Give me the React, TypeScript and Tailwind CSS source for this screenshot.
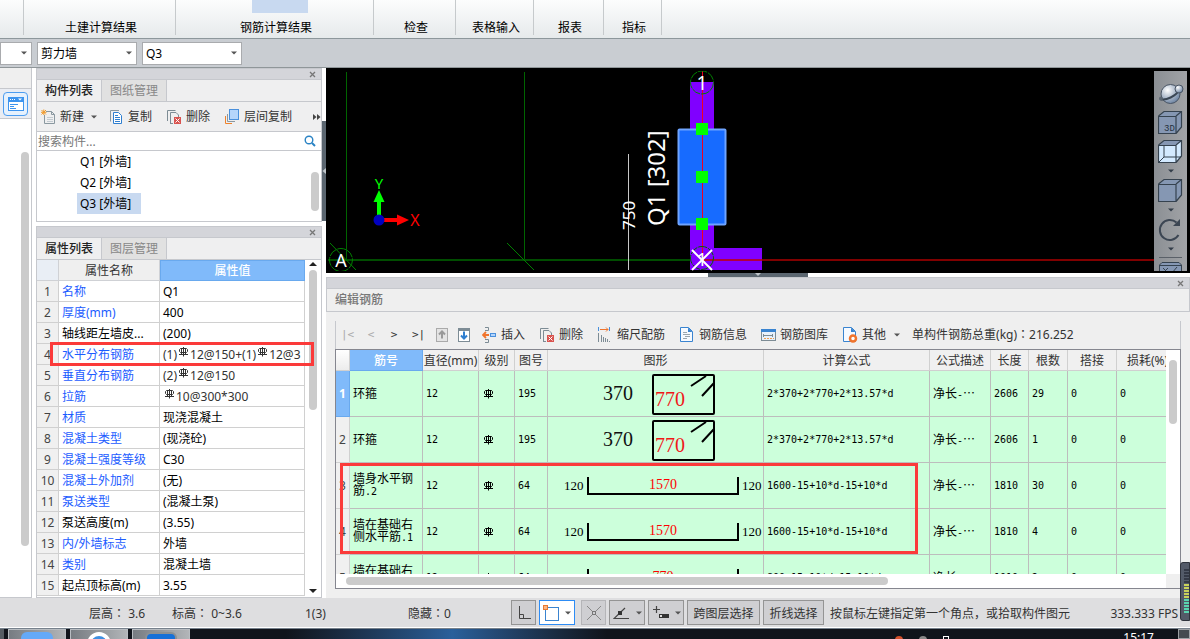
import React from "react";

const ui = "font-['Noto_Sans','Noto_Sans_CJK_SC',sans-serif]";
const grid = "font-['DejaVu_Sans_Mono','Noto_Sans_CJK_SC',monospace]";

type IconProps = { children: React.ReactNode; w?: number; h?: number };
const Icon = ({ children, w = 16, h = 16 }: IconProps) => (
  <svg width={w} height={h} viewBox={`0 0 ${w} ${h}`} fill="none" aria-hidden="true" className="shrink-0">
    {children}
  </svg>
);

// Full-width punctuation set in the centre of its box.
const Mark = ({ children }: { children: string }) => (
  <span lang="zh-TW" className="font-['Noto_Sans_CJK_TC',sans-serif] leading-none">
    {children}
  </span>
);

const Caret = ({ color = "#555" }: { color?: string }) => (
  <Icon w={6} h={4}>
    <path d="M0 0.5H6L3 3.5Z" fill={color} />
  </Icon>
);

const CloseIcon = () => (
  <Icon w={7} h={7}>
    <path d="M1 1L6 6M6 1L1 6" stroke="#777" strokeWidth="1.3" />
  </Icon>
);

const NewIcon = () => (
  <Icon>
    <path d="M5 2.5H10.5L13.5 5.5V14.5H3.5V6" stroke="#8a98a0" />
    <path d="M10.5 2.5V5.5H13.5" stroke="#8a98a0" />
    <path d="M6 8.5H12M6 10.5H12M6 12.5H12" stroke="#c2cad0" />
    <path d="M0.5 1L5 5.5M5 1L0.5 5.5M2.8 0.5V6M0 3.3H5.5" stroke="#f09a2c" />
  </Icon>
);

const CopyIcon = () => (
  <Icon>
    <path d="M1.500 12.500V1.500H10" stroke="#8a98a0" />
    <path d="M4.500 3.500H9.500L12.500 6.500V14.500H4.500Z" fill="#fff" stroke="#2f7fd0" />
    <path d="M6 6.500H9M6 8.500H11M6 10.500H11M6 12.500H11" stroke="#2f7fd0" />
  </Icon>
);

const DeleteIcon = () => (
  <Icon>
    <path d="M1.5 12V1.5H9.5M4.500 14.500V3.500H10L12.500 6V8M4 14.500H7" stroke="#7d8c95" />
    <rect x="8" y="8" width="7" height="7" fill="#d9534f" />
    <path d="M9.5 9.5L13.5 13.5M13.5 9.5L9.5 13.5" stroke="#fff" />
  </Icon>
);

const LayerCopyIcon = () => (
  <Icon>
    <path d="M1.5 7V14.5H8" stroke="#f0822c" />
    <path d="M3.5 5V12.5H11" stroke="#8a98a0" />
    <rect x="5.5" y="0.500" width="9" height="10" fill="#b5d5fb" stroke="#4a90dc" />
  </Icon>
);

const SearchIcon = () => (
  <Icon w={12} h={12}>
    <circle cx="5" cy="5" r="3.8" stroke="#2a83c4" strokeWidth="1.4" />
    <path d="M8 8L11 11" stroke="#2a83c4" strokeWidth="2" />
  </Icon>
);

const Rebar = ({ raised = false }: { raised?: boolean }) => (
  <svg
    width="9"
    height="10"
    viewBox="0 0 9 10"
    fill="none"
    stroke={raised ? "#333" : "#000"}
    className={raised ? "mx-0.5 mb-0.5 inline-block align-baseline" : "inline-block align-middle"}
    role="img"
    aria-label="HRB400"
  >
    <path d="M1.500 1.500H7.500L8.500 2.500V4.500L7.500 5.500H1.500L0.500 4.500V2.500Z M2.500 1.500V7.500 M4.500 0V9.500 M6.500 1.500V7.500 M0 7.500H9" strokeWidth="1" />
  </svg>
);

const ribbon = [
  { label: "", w: "w-[24px]", active: false },
  { label: "土建计算结果", w: "w-[152px]", active: false },
  { label: "钢筋计算结果", w: "w-[198px]", active: true },
  { label: "检查", w: "w-[82px]", active: false },
  { label: "表格输入", w: "w-[78px]", active: false },
  { label: "报表", w: "w-[70px]", active: false },
  { label: "指标", w: "w-[58px]", active: false },
];

function Ribbon() {
  return (
    <nav className="flex h-[39px] shrink-0 border-b border-[#8d979b] bg-linear-to-b from-[#fcfdfd] to-[#e6eaeb]">
      {ribbon.map((g, i) => (
        <div key={i} className={`${g.w} relative flex shrink-0 justify-center pl-0.5`}>
          {g.active && <span className="absolute top-0 h-[13px] w-14 translate-x-1 bg-[#c8d9f0]" />}
          {g.label && <button className="relative mt-[19px] h-[18px] text-black">{g.label}</button>}
          <span className="absolute top-0 right-0 h-[35px] w-px bg-[#c6cacc]" />
        </div>
      ))}
    </nav>
  );
}

function Combo({ label, value, w }: { label: string; value: string; w: string }) {
  return (
    <label className={`relative flex h-[23px] items-center border border-[#a9abae] bg-white ${w}`}>
      <select aria-label={label} className="h-full w-full appearance-none bg-transparent pt-0.5 pl-[3px] text-black">
        <option>{value}</option>
      </select>
      <span className="pointer-events-none absolute right-1">
        <Caret />
      </span>
    </label>
  );
}

function PanelHead() {
  return (
    <div className="flex h-[11px] shrink-0 items-center justify-end border-b border-[#c6c8cd] bg-[#d4d5da] pr-[5px]">
      <button aria-label="关闭">
        <CloseIcon />
      </button>
    </div>
  );
}

function Tabs({ first, second }: { first: string; second: string }) {
  return (
    <div className="flex h-[22px] shrink-0 border-b border-[#c6c8cd] bg-[#efeff0]">
      <button className="w-[65px] border-r border-[#c6c8cd] font-medium text-[#222]">{first}</button>
      <button className="w-[65px] border-r border-[#c6c8cd] bg-[#e1e1e1] text-[#888]">{second}</button>
    </div>
  );
}

function ComponentPanel() {
  return (
    <section className="flex h-[154px] shrink-0 flex-col border border-[#c6c8cd] bg-white">
      <PanelHead />
      <Tabs first="构件列表" second="图纸管理" />
      <div className="flex h-[30px] shrink-0 items-center border-b border-[#c6c8cd] bg-[#efeff0] pl-1 text-[#333]">
        <button className="flex items-center gap-[3px]">
          <NewIcon />
          新建
          <span className="ml-1">
            <Caret />
          </span>
        </button>
        <button className="ml-3 flex items-center gap-[3px]">
          <CopyIcon />
          复制
        </button>
        <button className="ml-3.5 flex items-center gap-1">
          <DeleteIcon />
          删除
        </button>
        <button className="ml-3.5 flex items-center gap-1">
          <LayerCopyIcon />
          层间复制
        </button>
        <button aria-label="更多" className="ml-auto">
          <Icon w={8} h={6}>
            <path d="M0 0L3.500 3L0 6ZM4 0L7.500 3L4 6Z" fill="#444" />
          </Icon>
        </button>
      </div>
      <label className="flex h-[19px] shrink-0 items-center border-b border-[#c6c8cd] pr-[5px] pl-px">
        <input aria-label="搜索构件" placeholder="搜索构件..." className="min-w-0 flex-1 pt-0.5 outline-none placeholder:text-[#777]" />
        <SearchIcon />
      </label>
      <div className="flex min-h-0 flex-1">
        <ul className="flex flex-1 flex-col items-start pl-10 text-black">
          {["Q1 [外墙]", "Q2 [外墙]", "Q3 [外墙]"].map((t, i) => (
            <li key={t} className={`h-[21px] pr-2.5 pl-[3px] leading-[21px] ${i === 2 ? "bg-[#c8d9f0]" : ""}`}>
              {t}
            </li>
          ))}
        </ul>
        <div className="mt-[21px] mr-0.5 h-[39px] w-2 rounded-full bg-[#cbcbcb]" />
      </div>
    </section>
  );
}

const props: [string, React.ReactNode, boolean][] = [
  ["名称", "Q1", true],
  ["厚度(mm)", "400", true],
  ["轴线距左墙皮...", "(200)", false],
  ["水平分布钢筋", <span className="text-[#333]">(1)<Rebar raised />12@150+(1)<Rebar raised />12@3</span>, true],
  ["垂直分布钢筋", <span className="text-[#333]">(2)<Rebar raised />12@150</span>, true],
  ["拉筋", <span className="text-[#333]"><Rebar raised />10@300*300</span>, true],
  ["材质", "现浇混凝土", true],
  ["混凝土类型", "(现浇砼)", true],
  ["混凝土强度等级", "C30", true],
  ["混凝土外加剂", "(无)", true],
  ["泵送类型", "(混凝土泵)", true],
  ["泵送高度(m)", "(3.55)", false],
  ["内/外墙标志", "外墙", true],
  ["类别", "混凝土墙", true],
  ["起点顶标高(m)", "3.55", false],
];

function PropertyPanel() {
  return (
    <section className="flex min-h-0 flex-1 flex-col border border-[#c6c8cd] bg-white">
      <PanelHead />
      <Tabs first="属性列表" second="图层管理" />
      <div className="relative flex min-h-0 flex-1">
        <div className="min-w-0 flex-1 overflow-hidden">
          <table className="w-full table-fixed border-separate border-spacing-0">
            <colgroup>
              <col className="w-[22px]" />
              <col className="w-[101px]" />
              <col />
            </colgroup>
            <thead>
              <tr className="h-[21px] leading-[18px]">
                <th className="border-r border-b border-[#cfd1d5] bg-[#e9eef5]" />
                <th className="border-r border-b border-[#cfd1d5] bg-[#efefef] p-0 pt-0.5 font-normal text-[#333]">属性名称</th>
                <th className="border border-[#69a9ee] bg-[#80bafa] p-0 pt-px font-medium text-white">属性值</th>
              </tr>
            </thead>
            <tbody>
              {props.map(([name, value, blue], i) => (
                <tr key={name} className="h-[21px] leading-[18px]">
                  <td className="border-r border-b border-[#d0d0d0] bg-[#f0f0f0] p-0 pt-0.5 text-center text-[#444]">{i + 1}</td>
                  <td className={`overflow-hidden border-r border-b border-[#d0d0d0] p-0 pt-0.5 pl-[3px] whitespace-nowrap ${blue ? "text-[#1c5cff]" : "text-black"}`}>
                    {name}
                  </td>
                  <td className="overflow-hidden border-r border-b border-[#d0d0d0] p-0 pt-0.5 pl-[3px] whitespace-nowrap text-black">
                    <div className="h-[18px]">{value}</div>
                  </td>
                </tr>
              ))}
            </tbody>
          </table>
        </div>
        <div className="flex w-4 shrink-0 flex-col items-center pt-0.5 pb-1">
          <Icon w={8} h={4}>
            <path d="M0 4H8L4 0Z" fill="#222" />
          </Icon>
          <div className="mt-1 h-[140px] w-2 rounded-full bg-[#cbcbcb]" />
          <div className="flex-1" />
          <Icon w={8} h={4}>
            <path d="M0 0H8L4 4Z" fill="#222" />
          </Icon>
        </div>
        <div className="pointer-events-none absolute top-[82px] right-[7px] left-[13px] h-6 border-3 border-[#fb3a3a]" />
      </div>
    </section>
  );
}

function Canvas() {
  return (
    <div className="flex h-[205px] shrink-0 bg-black pt-[3px] pr-[3px] pb-0.5">
      <svg className={`h-full min-w-0 flex-1 ${ui}`} fill="none">
        <g transform="translate(0 -3)">
          <path d="M20.500 4V192M198.500 4V192" stroke="#006400" />
          <path d="M2 192H376" stroke="#004d00" strokeWidth="2" />
          <path d="M4 175L30 202M181 175L208 202" stroke="#008000" />
          <circle cx="15" cy="192" r="11.5" stroke="#008000" strokeDasharray="9 1" />
          <text x="15" y="199" fill="#fff" fontSize="18" textAnchor="middle">A</text>
          <rect x="364" y="14" width="24" height="188" fill="#8000ff" />
          <rect x="388" y="180" width="48" height="22" fill="#8000ff" />
          <line x1="376" y1="192" x2="100%" y2="192" stroke="#800000" strokeWidth="2" />
          <line x1="376" y1="192" x2="436" y2="192" stroke="#b00040" strokeWidth="2" />
          <rect x="352.500" y="61.500" width="47" height="95" rx="1" fill="#176bff" stroke="#6ea4ff" strokeWidth="2" />
          <path d="M376.500 3V192" stroke="#f00020" />
          <circle cx="376" cy="14.500" r="11.500" stroke="#008000" strokeDasharray="9 1" />
          <circle cx="376" cy="190" r="11.500" stroke="#006400" strokeDasharray="9 1" />
          <text x="376" y="22" fill="#fff" fontSize="19" textAnchor="middle">1</text>
          <text x="376" y="198" fill="#fff" fontSize="18" textAnchor="middle">1</text>
          <path d="M366 182L386 202M386 182L366 202" stroke="#fff" strokeWidth="2" />
          <g fill="#0f0">
            <rect x="370" y="55" width="12" height="12" />
            <rect x="370" y="103" width="12" height="12" />
            <rect x="370" y="150" width="12" height="12" />
          </g>
          <path d="M302.500 86V202" stroke="#c8c8c8" />
          <text transform="translate(309 162) rotate(-90)" fill="#fff" fontSize="17">750</text>
          <text transform="translate(339 158) rotate(-90)" fill="#fff" fontSize="24">Q1 [302]</text>
          <path d="M53 150V133" stroke="#0f0" strokeWidth="4" />
          <path d="M47.500 134L53 122L58.500 134Z" fill="#0f0" />
          <path d="M55 152H72" stroke="#f00" strokeWidth="4" />
          <path d="M71 146.500L83 152L71 157.500Z" fill="#f00" />
          <circle cx="53" cy="152" r="5.500" fill="#0000c0" />
          <text x="53" y="121" fill="#0f0" fontSize="15" textAnchor="middle">Y</text>
          <text x="89" y="158" fill="#f00" fontSize="16" textAnchor="middle">X</text>
        </g>
      </svg>
      <div className="flex w-[33px] shrink-0 flex-col items-center overflow-hidden bg-linear-to-r from-[#8b8f94] to-[#a1a3a6] pt-2">
        <ViewTools />
      </div>
    </div>
  );
}

const Cube = ({ label, wire = false }: { label?: string; wire?: boolean }) => (
  <Icon w={25} h={25}>
    <path d="M0.500 6L6 1.500H23.500V17L18 23.500H0.500Z" fill={wire ? "#d3eaff" : "#8597b3"} />
    {wire && <path d="M0.500 6L6 1.500H23.500L18 6Z" fill="#8597b3" />}
    <path d="M0.500 6.500H18V23.500H0.500ZM0.500 6L6 1.500H23.500V17L18 23.500M18 6L23.500 1.500" stroke="#35424f" strokeWidth="1.200" />
    {wire && <path d="M6 6V18H23M6 18L0.500 23.500" stroke="#35424f" />}
    {label && (
      <text x="6" y="21" fontSize="9" fill="#26323e" fontFamily="Liberation Mono">
        {label}
      </text>
    )}
  </Icon>
);

function ViewTools() {
  return (
    <>
      <button aria-label="动态观察" className="h-[29px] shrink-0">
        <Icon w={26} h={26}>
          <defs>
            <radialGradient id="ball" cx="0.35" cy="0.3" r="0.8">
              <stop offset="0" stopColor="#fff" />
              <stop offset="1" stopColor="#5f7899" />
            </radialGradient>
          </defs>
          <circle cx="12.500" cy="13" r="9.500" fill="url(#ball)" stroke="#4a5564" />
          <path d="M2 18C8 20 18 15 21 9" stroke="#3a4654" strokeWidth="2" />
          <circle cx="21" cy="8" r="4" fill="url(#ball)" stroke="#4a5564" />
          <circle cx="3" cy="17.500" r="2" fill="#5b6672" />
        </Icon>
      </button>
      <button aria-label="三维" className="h-[29px] shrink-0">
        <Cube label="3D" />
      </button>
      <button aria-label="线框" className="h-[29px] shrink-0">
        <Cube wire />
      </button>
      <span className="flex h-2.5 shrink-0 items-center">
        <Caret color="#333d49" />
      </span>
      <button aria-label="实体" className="h-[29px] shrink-0">
        <Cube />
      </button>
      <span className="flex h-2.5 shrink-0 items-center">
        <Caret color="#333d49" />
      </span>
      <button aria-label="旋转" className="h-[29px] shrink-0">
        <Icon w={25} h={25}>
          <path d="M18.500 5.500A10 10 0 1 0 20.500 18" stroke="#3c4653" strokeWidth="2" />
          <path d="M22 2V9H15Z" fill="#3c4653" />
        </Icon>
      </button>
      <span className="flex h-2.5 shrink-0 items-center">
        <Caret color="#333d49" />
      </span>
      <span className="mt-[3px] h-px w-[23px] shrink-0 bg-[#5a6068]" />
      <span className="mt-[3px] shrink-0">
        <Icon w={25} h={14}>
          <path d="M1.500 14V4L4 1.500H21L23.500 4V14" fill="#8597b3" stroke="#35424f" />
          <path d="M1.500 4.500H23.500M5 7L10 12M10 7L5 12M14 12L19 6" stroke="#35424f" />
        </Icon>
      </span>
    </>
  );
}

const Stirrup = () => (
  <svg width="216" height="45" viewBox="0 0 216 45" fill="none" className="block font-['Liberation_Serif',serif]">
    <text x="55" y="29" fontSize="20" fill="#111">370</text>
    <rect x="105" y="4" width="61" height="39" rx="1" stroke="#000" strokeWidth="2" />
    <path d="M143 15L158 5M154 25L166 12" stroke="#000" strokeWidth="2" />
    <text x="107" y="35" fontSize="20" fill="#f01818">770</text>
  </svg>
);

const Bracket = ({ len }: { len: string }) => (
  <svg width="216" height="45" viewBox="0 0 216 45" fill="none" className="block font-['Liberation_Serif',serif]">
    <text x="16" y="27" fontSize="13" fill="#000">120</text>
    <path d="M40 14V31H190V14" stroke="#000" strokeWidth="2" />
    <text x="115" y="26" fontSize="14" fill="#f00" textAnchor="middle">{len}</text>
    <text x="194" y="27" fontSize="13" fill="#000">120</text>
  </svg>
);

const headers = ["直径(mm)", "级别", "图号", "图形", "计算公式", "公式描述", "长度", "根数", "搭接", "损耗(%)"];
const F1 = "2*370+2*770+2*13.57*d";
const F2 = "1600-15+10*d-15+10*d";
const rows: { name: string; suffix?: string; no: string; shape: React.ReactNode; f: string; len: string; n: string }[] = [
  { name: "环箍", no: "195", shape: <Stirrup />, f: F1, len: "2606", n: "29" },
  { name: "环箍", no: "195", shape: <Stirrup />, f: F1, len: "2606", n: "1" },
  { name: "墙身水平钢筋", suffix: ".2", no: "64", shape: <Bracket len="1570" />, f: F2, len: "1810", n: "30" },
  { name: "墙在基础右侧水平筋", suffix: ".1", no: "64", shape: <Bracket len="1570" />, f: F2, len: "1810", n: "4" },
  { name: "墙在基础右侧水平筋", suffix: ".2", no: "64", shape: <Bracket len="770" />, f: "800-15+10*d-15+10*d", len: "1010", n: "2" },
];

const cell = "overflow-hidden border-r border-b border-[#bdbdbd] bg-[#ccffdb] py-0 pr-0 pl-[3px] whitespace-nowrap";

function RebarTable() {
  return (
    <table className="w-[843px] table-fixed border-separate border-spacing-0 text-black">
      <colgroup>
        <col className="w-[14px]" />
        <col className="w-[73px]" />
        <col className="w-[56px]" />
        <col className="w-[36px]" />
        <col className="w-[33px]" />
        <col className="w-[216px]" />
        <col className="w-[166px]" />
        <col className="w-[61px]" />
        <col className="w-[38px]" />
        <col className="w-[39px]" />
        <col className="w-[49px]" />
        <col className="w-[62px]" />
      </colgroup>
      <thead>
        <tr className="h-[21px] leading-[18px] text-[#333]">
          <th className="border-r border-b border-[#d0d0d0] bg-linear-to-b from-white to-[#ececec] p-0" />
          <th className="border-r border-b border-[#69a9ee] bg-[#80bafa] p-0 pt-0.5 font-medium text-white">筋号</th>
          {headers.map((h) => (
            <th key={h} className="border-r border-b border-[#d0d0d0] bg-[#f0f0f0] p-0 pt-0.5 font-normal whitespace-nowrap">
              {h}
            </th>
          ))}
        </tr>
      </thead>
      <tbody>
        {rows.map((r, i) => (
          <tr key={i} className={`h-[46px] text-[10px] ${grid}`}>
            <td
              className={`border-r border-b p-0 text-center text-xs ${ui} ${
                i === 0 ? "border-[#69a9ee] bg-[#80bafa] font-bold text-white" : "border-[#d0d0d0] bg-[#f0f0f0] text-[#444]"
              }`}
            >
              {i + 1}
            </td>
            <td className="border-r border-b border-[#bdbdbd] bg-[#ccffdb] py-0 pr-2 pl-[3px] text-xs leading-3">
              {r.name}
              {r.suffix && <span className="text-[10px] leading-3">{r.suffix}</span>}
            </td>
            <td className={cell}>12</td>
            <td className={cell}>
              <span className="ml-0.5">
                <Rebar />
              </span>
            </td>
            <td className={cell}>{r.no}</td>
            <td className="overflow-hidden border-r border-b border-[#bdbdbd] bg-[#ccffdb] p-0">{r.shape}</td>
            <td className={cell}>{r.f}</td>
            <td className={cell}>
              <span className="text-xs">净长</span>-<span className="font-['Noto_Sans_CJK_SC',sans-serif] text-xs">…</span>
            </td>
            <td className={cell}>{r.len}</td>
            <td className={cell}>{r.n}</td>
            <td className={cell}>0</td>
            <td className={cell}>0</td>
          </tr>
        ))}
      </tbody>
    </table>
  );
}

function RebarToolbar() {
  const nav = "w-3 shrink-0 text-center font-['DejaVu_Sans_Mono',monospace] text-[11px]";
  return (
    <div className="flex h-7 shrink-0 items-center border-x border-[#c6c8cd] pl-[5px] whitespace-nowrap text-[#333]">
      <button aria-label="首行" className={`${nav} text-[#aaa]`}>|&lt;</button>
      <button aria-label="上一行" className={`${nav} ml-3 text-[#aaa]`}>&lt;</button>
      <button aria-label="下一行" className={`${nav} ml-[11px]`}>&gt;</button>
      <button aria-label="末行" className={`${nav} ml-3`}>&gt;|</button>
      <button aria-label="上移" className="ml-[11px]">
        <Icon w={14} h={16}>
          <rect x="1.500" y="1.500" width="11" height="13" fill="#e4e4e4" stroke="#aaa" />
          <path d="M7 11.500V5M4 7.500L7 4.500L10 7.500" stroke="#999" strokeWidth="2" />
        </Icon>
      </button>
      <button aria-label="下移" className="ml-2">
        <Icon w={14} h={16}>
          <rect x="1.500" y="1.500" width="11" height="13" fill="#fff" stroke="#7d8c95" />
          <rect x="1" y="1" width="12" height="3" fill="#7d8c95" />
          <path d="M7 4.500V11M4 8.500L7 11.500L10 8.500" stroke="#2f7fd0" strokeWidth="2" />
        </Icon>
      </button>
      <button className="ml-[11px] flex items-center gap-[3px]">
        <Icon w={16} h={18}>
          <path d="M3 1.500H6.500V4.500H3M3 13.500H6.500V16.500H3" stroke="#7d8c95" />
          <path d="M1 9H7M4 6L1 9L4 12" stroke="#f0742c" strokeWidth="1.800" />
          <rect x="8.500" y="7.500" width="5" height="3" fill="#b5d5fb" stroke="#4a90dc" />
        </Icon>
        插入
      </button>
      <button className="ml-3.5 flex items-center gap-1">
        <DeleteIcon />
        删除
      </button>
      <button className="ml-3.5 flex items-center gap-1">
        <Icon>
          <path d="M1.500 0V4M12.500 0V4" stroke="#4a90dc" />
          <path d="M3 2.500H11M9 0.500L11 2.500L9 4.500" stroke="#f0742c" />
          <path d="M1.500 6V15M4.500 8V15M6.500 10V15M8.500 11V15M10.500 12V15M12.500 14V15" stroke="#7d8c95" />
        </Icon>
        缩尺配筋
      </button>
      <button className="ml-3.5 flex items-center gap-1">
        <Icon>
          <path d="M1.500 0.500H9.500L13.500 4.500V14.500H1.500Z" fill="#f6faff" stroke="#3a84d0" />
          <path d="M9 0.500V5H13.500Z" fill="#3a84d0" />
          <path d="M4 5.500H8M4 7.500H11M6 9.500H11M4 11.500H8" stroke="#9aa6ae" />
        </Icon>
        钢筋信息
      </button>
      <button className="ml-3.5 flex items-center gap-[3px]">
        <Icon>
          <rect x="0.500" y="2.500" width="14" height="11" fill="#e8f1fb" stroke="#7d8c95" />
          <rect x="0" y="2" width="15" height="3" fill="#3a84d0" />
          <path d="M2 8.500H11M11.500 7V10M2.500 7V10" stroke="#7d8c95" />
          <path d="M3 11.500H13" stroke="#f0a050" strokeDasharray="2 1" />
        </Icon>
        钢筋图库
      </button>
      <button className="ml-3.5 flex items-center gap-1">
        <Icon>
          <path d="M1.500 0.500H9.500L13.500 4.500V14.500H1.500Z" fill="#f6faff" stroke="#3a84d0" />
          <path d="M9 0.500V5H13.500Z" fill="#3a84d0" />
          <circle cx="11" cy="11.500" r="3" fill="#fff" stroke="#f0742c" strokeWidth="2.500" />
        </Icon>
        其他
        <span className="ml-1">
          <Caret />
        </span>
      </button>
      <span className="ml-3">
        单构件钢筋总重(kg)<Mark>：</Mark>216.252
      </span>
    </div>
  );
}

function RebarEditor() {
  return (
    <section className="flex min-h-0 flex-1 flex-col bg-[#efefef]">
      <div className="border border-[#c6c8cd]">
        <PanelHead />
        <h2 className="h-[22px] pl-2 leading-[22px] font-medium text-[#777]">编辑钢筋</h2>
      </div>
      <div className="mx-[9px] mt-[9px] mb-[9px] flex min-h-0 flex-1 flex-col">
        <RebarToolbar />
        <div className="relative flex min-h-0 flex-1 flex-col border border-[#85868f] bg-white">
          <div className="flex min-h-0 flex-1">
            <div className="min-w-0 flex-1 overflow-hidden">
              <RebarTable />
            </div>
            <div className="flex w-[14px] shrink-0 justify-center bg-white pt-2.5">
              <div className="h-16 w-2 rounded-full bg-[#cbcbcb]" />
            </div>
          </div>
          <div className="flex h-[14px] shrink-0 items-center">
            <div className="ml-2.5 h-2 w-[542px] rounded-full bg-[#cbcbcb]" />
            <div className="ml-auto h-full w-[14px] bg-[#efefef]" />
          </div>
          <div className="pointer-events-none absolute top-[113px] left-1 h-[91px] w-[578px] border-3 border-[#fb3a3a]" />
        </div>
      </div>
    </section>
  );
}

const tool = "flex h-[25px] shrink-0 items-center justify-center border border-[#949494] bg-[#cfcfd2]";

function StatusBar() {
  return (
    <footer className="relative flex h-[30px] shrink-0 items-center border-b border-white bg-[#dedee0] whitespace-nowrap text-[#333]">
      <span className="ml-[89px] w-[83px] pt-0.5">层高<Mark>：</Mark> 3.6</span>
      <span className="w-[133px] pt-0.5">标高<Mark>：</Mark> 0~3.6</span>
      <span className="w-[103px] pt-0.5">1(3)</span>
      <span className="w-[103px] pt-0.5">隐藏<Mark>：</Mark>0</span>
      <button aria-label="正交" className={`${tool} w-[25px]`}>
        <Icon>
          <path d="M3.500 1V13.500H15M3.500 9.500H7.500V13.500" stroke="#444" />
        </Icon>
      </button>
      <button aria-label="捕捉" className="ml-[3px] flex h-[25px] w-9 shrink-0 items-center justify-between border border-[#2d8cf5] bg-white px-[3px]">
        <Icon w={18} h={18}>
          <rect x="2.500" y="3.500" width="13" height="13" stroke="#3a84d0" />
          <rect x="0.500" y="1.500" width="4" height="4" fill="#fbb584" stroke="#e87a30" />
        </Icon>
        <Caret />
      </button>
      <button aria-label="交点" className="ml-1.5 flex h-[25px] w-[25px] shrink-0 items-center justify-center border border-[#b5b5b8] bg-[#cfcfd2]">
        <Icon>
          <path d="M1 1L15 15M15 1L1 15" stroke="#888" />
          <rect x="6.500" y="6.500" width="3" height="3" fill="#cfcfd2" stroke="#777" />
        </Icon>
      </button>
      <button aria-label="极轴" className={`${tool} ml-[3px] w-9 gap-1.5`}>
        <Icon w={17} h={16}>
          <path d="M12 3L1 13.500H16" stroke="#444" strokeWidth="1.200" />
          <rect x="5" y="6" width="4" height="4" fill="#333" />
        </Icon>
        <Caret />
      </button>
      <button aria-label="动态输入" className={`${tool} ml-[3px] w-9 gap-1.5`}>
        <Icon w={17} h={16}>
          <path d="M4.500 1V8M1 4.500H8" stroke="#444" strokeWidth="1.200" />
          <rect x="7" y="9" width="10" height="4" fill="#333" />
          <rect x="8" y="10" width="2" height="2" fill="#ddd" />
        </Icon>
        <Caret />
      </button>
      <button className={`${tool} ml-[3px] w-[73px] pt-0.5`}>跨图层选择</button>
      <button className={`${tool} ml-[3px] w-[61px] pt-0.5`}>折线选择</button>
      <span className="ml-1.5 pt-0.5">按鼠标左键指定第一个角点，或拾取构件图元</span>
      <span className="mr-3 ml-auto pt-0.5">333.333 FPS</span>
      <div className="absolute right-0 bottom-1.5 flex h-[59px] w-[10px] flex-col items-end gap-px rounded-l-[3px] border border-[#2f333c] bg-[#535a68] pt-1.5">
        {Array.from({ length: 15 }, (_, i) => (
          <span key={i} className={`h-0.5 w-[5px] ${i < 5 ? "bg-[#343946]" : i < 10 ? "bg-[#c9d25a]" : "bg-[#59d6b0]"}`} />
        ))}
      </div>
    </footer>
  );
}

function Taskbar() {
  const item = "flex h-full w-[58px] justify-center overflow-hidden border-x border-t border-[#b8bdc2] bg-linear-to-r from-[#777c82] to-[#b2b5b8]";
  return (
    <div className="flex h-[11px] shrink-0 gap-1 overflow-hidden border-t border-[#77818c] bg-linear-to-r from-[#10141b] from-24% via-[#2a609b] via-38% to-[#10141b] to-51%">
      <button aria-label="窗口" className="h-full w-1 bg-[#555c63]" />
      <button aria-label="应用一" className={item}>
        <span className="mt-0.5 h-4 w-8 rounded-md bg-[#64a9f8]" />
      </button>
      <button aria-label="应用二" className={item}>
        <span className="mt-0.5 h-6 w-6 rounded-full border-4 border-white bg-[#3f8fe0]" />
      </button>
      <button aria-label="应用三" className={item}>
        <span className="mt-0.5 h-4 w-8 rounded-md border-2 border-[#8c9093] bg-[#1670d8]" />
      </button>
      <span className="mt-[7px] ml-auto flex gap-4">
        <span className="h-2 w-2 rounded-full bg-[#d5502b]" />
        <span className="h-2 w-2 rounded-full bg-[#888]" />
        <span className="h-2 w-1.5 border border-white" />
      </span>
      <time className="ml-[170px] leading-[18px] text-white">15:17</time>
      <button aria-label="显示桌面" className="ml-5 h-full w-3 border border-[#9da1a5] bg-[#454a50]" />
    </div>
  );
}

export default function App() {
  return (
    <div className={`flex h-screen flex-col overflow-hidden bg-white text-xs ${ui}`} lang="zh-CN">
      <Ribbon />
      <div className="flex h-[29px] shrink-0 items-center gap-[5px] border-b border-[#8f9699] bg-[#c9cdd2]">
        <Combo label="楼层" value="" w="w-8" />
        <Combo label="构件类型" value="剪力墙" w="w-[100px]" />
        <Combo label="构件" value="Q3" w="w-[100px]" />
      </div>
      <main className="flex min-h-0 flex-1">
        <aside className="flex w-8 shrink-0 flex-col border-r border-b border-[#c6c8cd]">
          <div className="h-[21px] border-b border-[#c6c8cd] bg-[#efefef]" />
          <div className="flex h-[30px] items-center justify-center border-b border-[#c6c8cd] bg-[#eaedf3]">
            <button aria-label="导航" className="flex h-6 w-[25px] items-center justify-center rounded-sm border border-[#4d9df0] bg-[#e6f1fd]">
              <Icon w={16} h={14}>
                <rect x="0.500" y="0.500" width="15" height="13" fill="#fff" stroke="#3d94ee" />
                <rect x="0" y="0" width="16" height="5" fill="#3d94ee" />
                <path d="M2 2.500H7" stroke="#fff" strokeDasharray="1 1" />
                <path d="M10 1.500H14L12 3.500Z" fill="#fff" />
                <path d="M2 7.500H10M2 9.500H6M2 11.500H8" stroke="#3d94ee" />
              </Icon>
            </button>
          </div>
          <div className="mt-[33px] mr-0.5 h-[394px] w-2 self-end rounded-full bg-[#cbcbcb]" />
        </aside>
        <div className="ml-1 flex w-[286px] shrink-0 flex-col gap-1">
          <ComponentPanel />
          <PropertyPanel />
        </div>
        <div className="w-1 shrink-0 pt-[53px]">
          <button aria-label="折叠左侧" className="flex h-[100px] w-1 items-center justify-center bg-[#5b6670]">
            <Icon w={4} h={6}>
              <path d="M4 0V6L0.500 3Z" fill="#c0c6cb" />
            </Icon>
          </button>
        </div>
        <div className="flex min-w-0 flex-1 flex-col">
          <Canvas />
          <div className="flex h-1 shrink-0 justify-center">
            <button aria-label="折叠下方" className="flex h-1 w-[100px] items-center justify-center bg-[#5b6670]">
              <Icon w={6} h={4}>
                <path d="M0 0H6L3 3Z" fill="#c0c6cb" />
              </Icon>
            </button>
          </div>
          <RebarEditor />
        </div>
      </main>
      <StatusBar />
      <Taskbar />
    </div>
  );
}
